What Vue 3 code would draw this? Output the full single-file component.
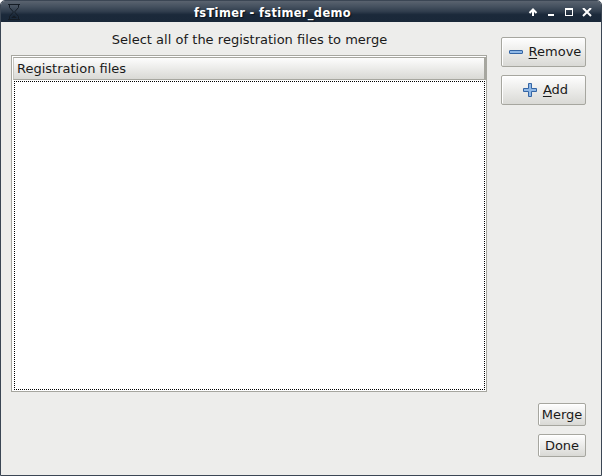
<script setup>
import { ref } from 'vue'

const files = ref([])
</script>

<template>
  <div class="window">
    <header class="titlebar">
      <svg class="app-icon" width="14" height="18" viewBox="0 0 14 18">
        <path d="M1 1.500h12M1 16.500h12" stroke="#141c25" />
        <path d="M2.500 2v2.500l3.500 4v1l-3.500 4v2.500M11.500 2v2.500l-3.500 4v1l3.500 4v2.500" fill="none" stroke="#141c25" />
        <path d="M4 15l3-2.500l3 2.500z" fill="#141c25" />
      </svg>
      <h1 class="title">fsTimer - fstimer_demo</h1>
      <div class="controls">
        <svg width="10" height="10" viewBox="0 0 10 10"><path d="M5 8V1.500M1.500 5L5 1.500L8.500 5" fill="none" stroke="#fff" stroke-width="2" /></svg>
        <svg width="8" height="10" viewBox="0 0 8 10"><path d="M1 7h6" stroke="#fff" stroke-width="2" /></svg>
        <svg width="10" height="10" viewBox="0 0 10 10" shape-rendering="crispEdges"><path d="M1 0h8v8h-8zM2 2v5h6v-5z" fill="#fff" fill-rule="evenodd" /></svg>
        <svg width="10" height="10" viewBox="0 0 10 10"><path d="M1 0l8 8M9 0l-8 8" stroke="#fff" stroke-width="2" /></svg>
      </div>
    </header>
    <main class="body">
      <section class="left">
        <p class="prompt">Select all of the registration files to merge</p>
        <div class="list">
          <div class="column-head">Registration files</div>
          <div class="rows">
            <div v-for="file in files" :key="file">{{ file }}</div>
          </div>
        </div>
      </section>
      <aside class="side">
        <button class="btn large remove">
          <svg width="16" height="16" viewBox="0 0 16 16"><rect x="1.500" y="6.500" width="13" height="3" rx=".5" fill="#8fb8e6" stroke="#3465a4" /></svg>
          <span><u>R</u>emove</span>
        </button>
        <button class="btn large add">
          <svg width="16" height="16" viewBox="0 0 16 16"><path d="M6.500 1.500h3v5h5v3h-5v5h-3v-5h-5v-3h5z" fill="#8fb8e6" stroke="#3465a4" stroke-linejoin="round" /></svg>
          <span><u>A</u>dd</span>
        </button>
        <button class="btn small merge">Merge</button>
        <button class="btn small">Done</button>
      </aside>
    </main>
  </div>
</template>

<style>
body {
  margin: 0;
  background: #fff;
}
</style>

<style scoped>
.window {
  box-sizing: border-box;
  width: 602px;
  height: 476px;
  display: flex;
  flex-direction: column;
  border: 1px solid #3b4654;
  border-radius: 5px 5px 0 0;
  background: #ededeb;
  overflow: hidden;
  font: 13px/16px "DejaVu Sans", sans-serif;
  color: #1a1a1a;
}
.titlebar {
  flex: none;
  height: 21px;
  display: grid;
  grid-template-columns: 20px 1fr 79px;
  align-items: center;
  background: linear-gradient(#5a636f 0, #465260 25%, #303d4d 50%, #1b293a 65%, #1a2839 100%);
}
.app-icon {
  margin-left: 6px;
}
.title {
  margin: 0;
  padding: 3px 0 0 2px;
  text-align: center;
  font-weight: 700;
  font-size: 11.45px;
  letter-spacing: .34px;
  font-family: "DejaVu Sans", sans-serif;
  line-height: 16px;
  color: #fff;
  text-shadow: 1px 1px 1px #0b121b;
  white-space: nowrap;
}
.controls {
  display: flex;
  justify-content: flex-end;
  gap: 9px;
  padding: 3px 9px 0 0;
}
.controls svg:last-child {
  margin-left: -1px;
}
.body {
  flex: 1;
  display: flex;
  justify-content: space-between;
  padding: 0 15px 0 10px;
}
.left {
  width: 476px;
}
.prompt {
  margin: 10px 0 7px;
  padding-left: 1px;
  text-align: center;
  word-spacing: .1px;
}
.list {
  box-sizing: border-box;
  height: 337px;
  padding: 1px;
  display: flex;
  flex-direction: column;
  border: 1px solid #a6a69f;
  background: #fff;
}
.column-head {
  box-sizing: border-box;
  height: 23px;
  padding: 3px;
  margin: 0 -1px 1px 0;
  border: 1px solid #a6a69f;
  border-left-color: #c6c6c0;
  border-right: 2px solid #a6a69f;
  background: linear-gradient(#fdfdfd, #d9d9d5);
}
.rows {
  flex: 1;
  margin: 0 0 0 1px;
  border: 1px dotted #000;
}
.side {
  display: flex;
  flex-direction: column;
  align-items: flex-end;
  padding: 15px 0 18px;
}
.btn {
  box-sizing: border-box;
  display: flex;
  align-items: center;
  justify-content: center;
  margin: 0;
  padding: 0;
  border: 1px solid #a6a69f;
  border-radius: 2px;
  background: linear-gradient(#fefefe, #d9d9d5);
  box-shadow: inset 1px 1px 0 #fff;
  font: inherit;
  color: inherit;
}
.large {
  width: 85px;
  height: 30px;
  gap: 5px;
  padding-left: 2px;
}
.large u {
  text-underline-offset: 2px;
  text-decoration-thickness: 1px;
}
.add {
  margin-top: 8px;
  padding-left: 3px;
}
.small {
  width: 48px;
  height: 23px;
}
.merge {
  margin-top: auto;
  margin-bottom: 8px;
}
</style>
